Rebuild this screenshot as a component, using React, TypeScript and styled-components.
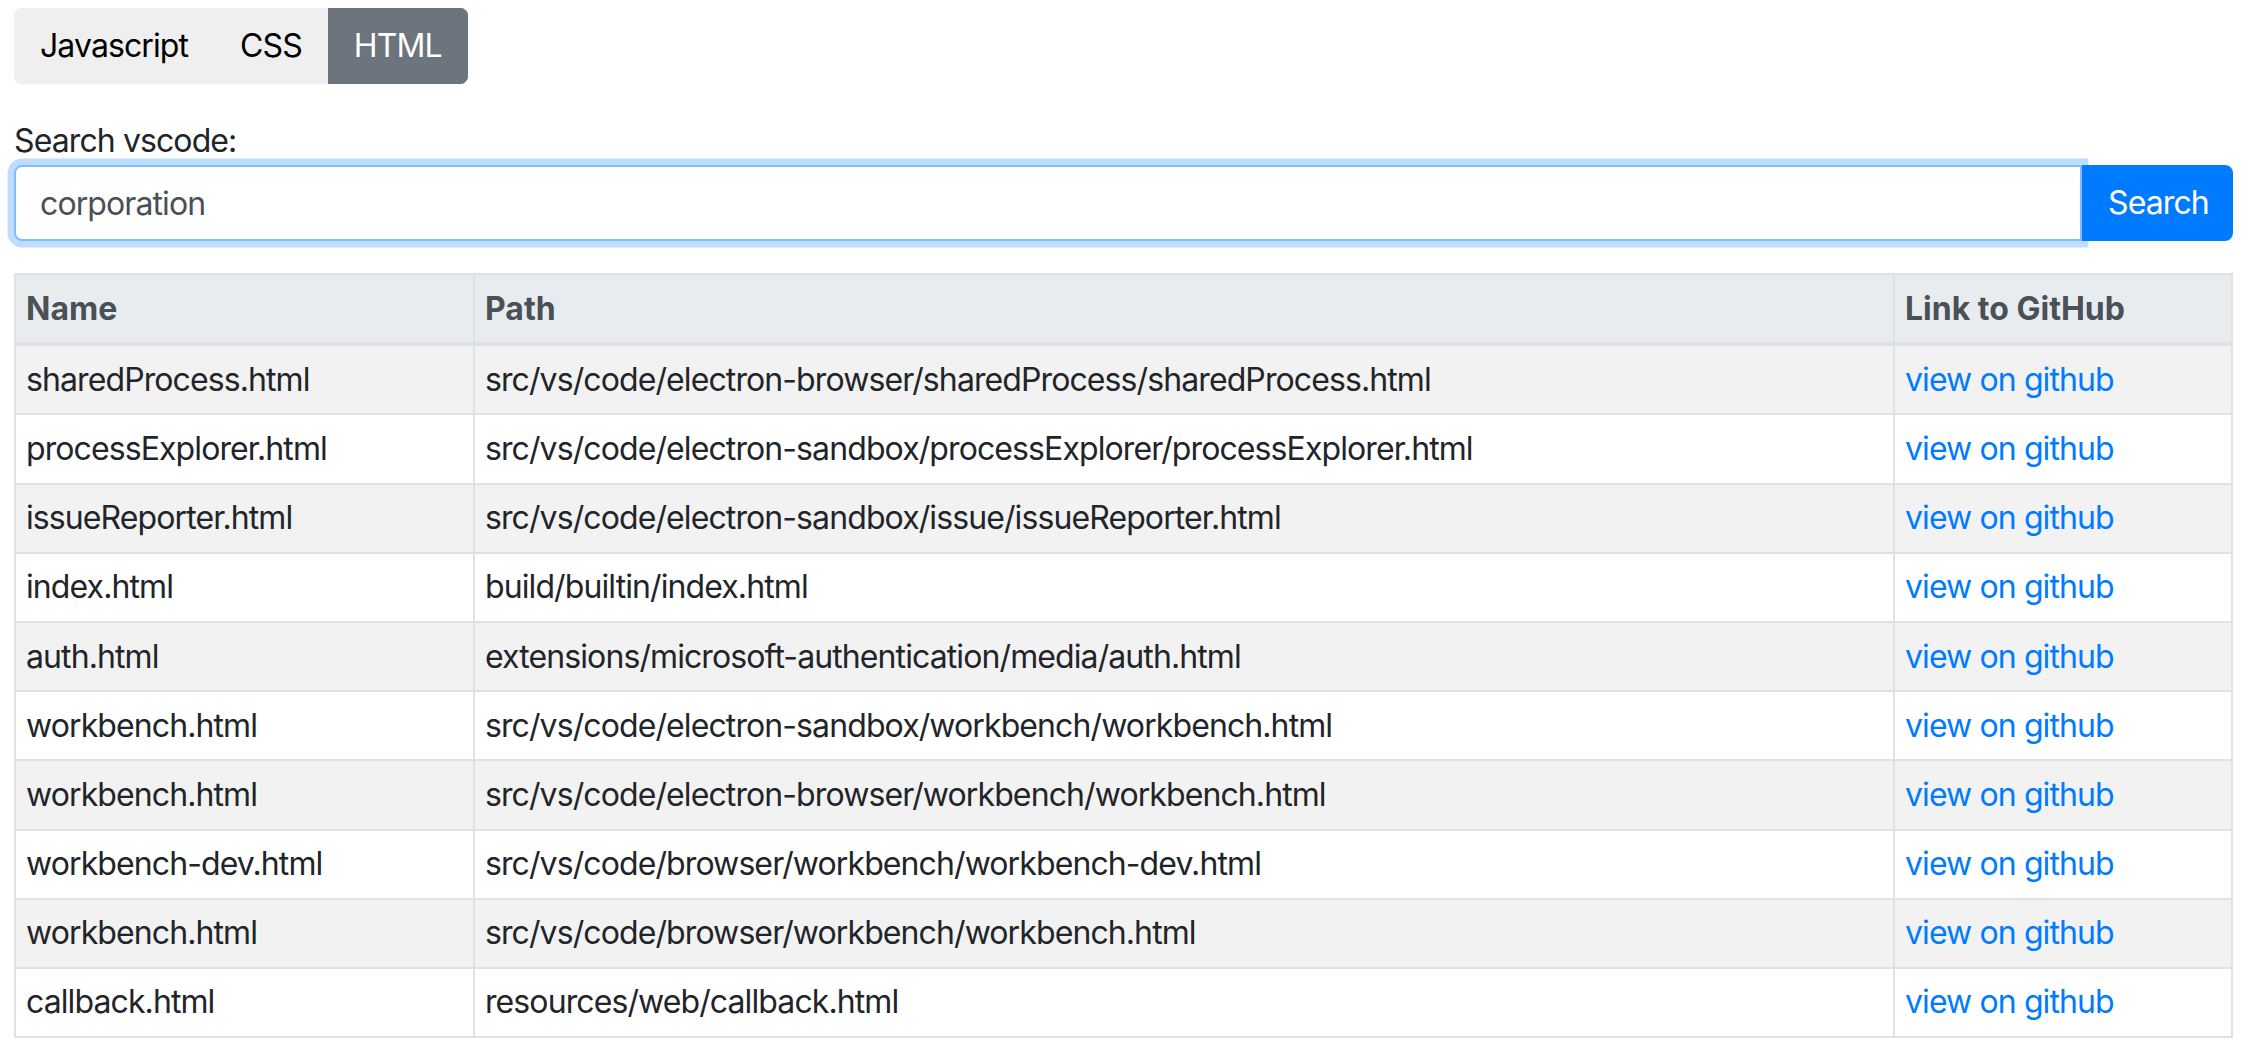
import React, { useState } from 'react';
import styled, { createGlobalStyle } from 'styled-components';

const GlobalStyle = createGlobalStyle`
  html, body {
    margin: 0;
    padding: 0;
    background: #ffffff;
  }
  body {
    font-family: Inter, 'Liberation Sans', Arial, sans-serif;
    font-size: 32px;
    line-height: 48px;
    letter-spacing: -0.9px;
    color: #212529;
  }
  * {
    box-sizing: border-box;
  }
`;

const Page = styled.div`
  padding: 8px 19px 0 14px;
`;

const TabGroup = styled.div`
  display: inline-flex;
  border-radius: 8px;
  overflow: hidden;
`;

const TabButton = styled.button<{ $active?: boolean }>`
  font: inherit;
  letter-spacing: inherit;
  line-height: 48px;
  padding: 12px 24px;
  border: 2px solid ${(p) => (p.$active ? '#6c757d' : '#efefef')};
  background: ${(p) => (p.$active ? '#6c757d' : '#efefef')};
  color: ${(p) => (p.$active ? '#ffffff' : '#000000')};
  cursor: pointer;
`;

const SearchForm = styled.form`
  margin-top: 33px;
`;

const Label = styled.label`
  display: block;
  line-height: 48px;
`;

const InputGroup = styled.div`
  display: flex;
`;

const SearchInput = styled.input`
  flex: 1;
  font: inherit;
  letter-spacing: inherit;
  line-height: 48px;
  height: 76px;
  padding: 12px 24px;
  border: 2px solid #80bdff;
  border-radius: 8px 0 0 8px;
  color: #495057;
  outline: none;
  box-shadow: 0 0 0 6.4px rgba(0, 123, 255, 0.25);
`;

const SearchButton = styled.button`
  font: inherit;
  letter-spacing: inherit;
  line-height: 48px;
  height: 76px;
  width: 151px;
  padding: 12px 24px;
  border: 2px solid #007bff;
  background: #007bff;
  color: #ffffff;
  border-radius: 0 8px 8px 0;
  cursor: pointer;
`;

const Table = styled.table`
  width: 100%;
  margin-top: 32px;
  border-collapse: collapse;
  table-layout: fixed;
  border: 2px solid #dee2e6;
`;

const HeadCell = styled.th`
  text-align: left;
  font-weight: 700;
  letter-spacing: 0;
  color: #495057;
  background: #e9ecef;
  padding: 9.6px 10px;
  border: 2px solid #dee2e6;
  border-bottom-width: 4px;
`;

const Row = styled.tr`
  &:nth-of-type(odd) {
    background: #f2f2f2;
  }
`;

const Cell = styled.td`
  padding: 9.6px 10px;
  border: 2px solid #dee2e6;
  white-space: nowrap;
`;

const GithubLink = styled.a`
  color: #007bff;
  text-decoration: none;
`;

const files = [
  ['sharedProcess.html', 'src/vs/code/electron-browser/sharedProcess/sharedProcess.html'],
  ['processExplorer.html', 'src/vs/code/electron-sandbox/processExplorer/processExplorer.html'],
  ['issueReporter.html', 'src/vs/code/electron-sandbox/issue/issueReporter.html'],
  ['index.html', 'build/builtin/index.html'],
  ['auth.html', 'extensions/microsoft-authentication/media/auth.html'],
  ['workbench.html', 'src/vs/code/electron-sandbox/workbench/workbench.html'],
  ['workbench.html', 'src/vs/code/electron-browser/workbench/workbench.html'],
  ['workbench-dev.html', 'src/vs/code/browser/workbench/workbench-dev.html'],
  ['workbench.html', 'src/vs/code/browser/workbench/workbench.html'],
  ['callback.html', 'resources/web/callback.html'],
];

const tabs = ['Javascript', 'CSS', 'HTML'];

const App: React.FC = () => {
  const [tab, setTab] = useState('HTML');
  const [query, setQuery] = useState('corporation');

  return (
    <Page>
      <GlobalStyle />
      <TabGroup>
        {tabs.map((t) => (
          <TabButton key={t} $active={t === tab} onClick={() => setTab(t)}>
            {t}
          </TabButton>
        ))}
      </TabGroup>
      <SearchForm onSubmit={(e) => e.preventDefault()}>
        <Label htmlFor="search">Search vscode:</Label>
        <InputGroup>
          <SearchInput id="search" value={query} onChange={(e) => setQuery(e.target.value)} />
          <SearchButton type="submit">Search</SearchButton>
        </InputGroup>
      </SearchForm>
      <Table>
        <colgroup>
          <col style={{ width: 459 }} />
          <col style={{ width: 1420 }} />
          <col />
        </colgroup>
        <thead>
          <tr>
            <HeadCell>Name</HeadCell>
            <HeadCell>Path</HeadCell>
            <HeadCell>Link to GitHub</HeadCell>
          </tr>
        </thead>
        <tbody>
          {files.map(([name, path], i) => (
            <Row key={i}>
              <Cell>{name}</Cell>
              <Cell>{path}</Cell>
              <Cell>
                <GithubLink href="#">view on github</GithubLink>
              </Cell>
            </Row>
          ))}
        </tbody>
      </Table>
    </Page>
  );
};

export default App;
